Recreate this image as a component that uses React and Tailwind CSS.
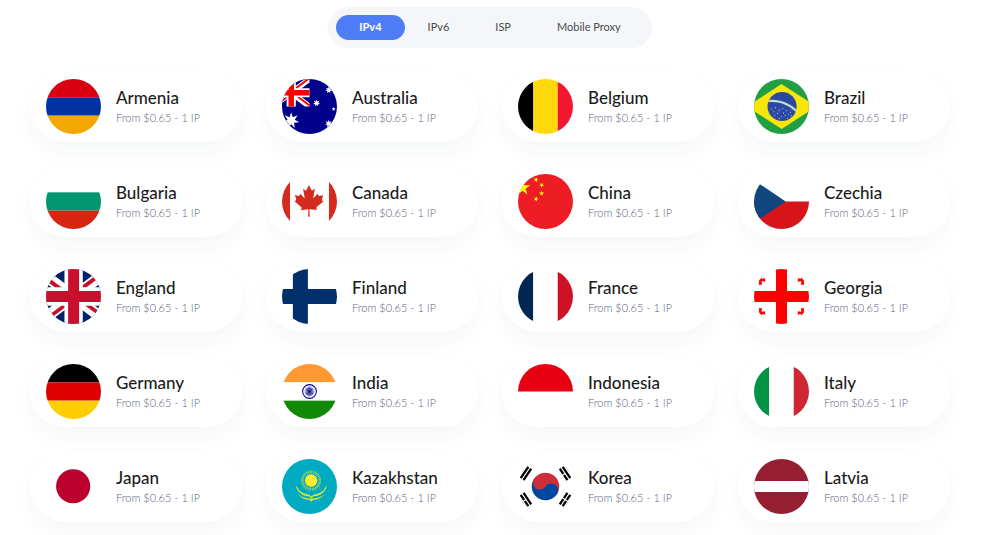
import React, { useState } from 'react';

// points of a regular star, starting from the top (or from `turn` degrees)
function starPoints(cx, cy, outer, inner, tips, turn = 0) {
  const points = [];
  for (let i = 0; i < tips * 2; i++) {
    const r = i % 2 === 0 ? outer : inner;
    const angle = (Math.PI * i) / tips - Math.PI / 2 + (turn * Math.PI) / 180;
    points.push((cx + r * Math.cos(angle)).toFixed(1) + ',' + (cy + r * Math.sin(angle)).toFixed(1));
  }
  return points.join(' ');
}

function Rows({ colors }) {
  return colors.map((color, i) => (
    <rect key={i} y={i * 160} width="640" height="160" fill={color} />
  ));
}

function Columns({ colors }) {
  return colors.map((color, i) => (
    <rect key={i} x={i * 213.3} width="213.4" height="480" fill={color} />
  ));
}

function UnionJack({ blue, red }) {
  return (
    <g>
      <path fill={blue} d="M0 0h640v480H0z" />
      <path fill="#fff" d="m75 0 244 181L562 0h78v62L400 241l240 178v61h-80L320 301 81 480H0v-60l239-178L0 64V0z" />
      <path fill={red} d="m424 281 216 159v40L369 281zm-184 20 6 35L54 480H0zM640 0v3L391 191l2-44L590 0zM0 0l239 176h-60L0 42z" />
      <path fill="#fff" d="M241 0v480h160V0zM0 160v160h640V160z" />
      <path fill={red} d="M0 193v96h640v-96zM273 0v480h96V0z" />
    </g>
  );
}

function Australia() {
  return (
    <g>
      <path fill="#00008b" d="M0 0h640v480H0z" />
      <g transform="scale(.5)">
        <UnionJack blue="#00008b" red="#f00" />
      </g>
      <g fill="#fff">
        <polygon points={starPoints(160, 362, 72, 32, 7)} />
        <polygon points={starPoints(488, 96, 32, 15, 7)} />
        <polygon points={starPoints(382, 210, 32, 15, 7)} />
        <polygon points={starPoints(488, 390, 34, 16, 7)} />
        <polygon points={starPoints(531, 262, 18, 8, 5)} />
      </g>
    </g>
  );
}

function Brazil() {
  const stars = [
    [232, 262], [252, 286], [268, 250], [286, 300], [300, 272], [318, 330], [330, 256], [338, 296],
    [352, 318], [362, 276], [372, 344], [384, 306], [398, 290], [406, 322], [300, 344], [262, 316], [412, 268],
  ];
  return (
    <g>
      <path fill="#229e45" d="M0 0h640v480H0z" />
      <path fill="#f8e509" d="m321.4 436 301.5-195.7L319.6 44 17.1 240.7z" />
      <circle cx="325" cy="240" r="127" fill="#2b49a3" />
      <path fill="#c4dfd2" d="M444.4 285.8a125 125 0 0 0 5.8-19.8c-67.8-59.5-143.3-90-238.7-83.7a125 125 0 0 0-8.5 20.9c113-10.8 196 39.2 241.4 82.6" />
      <g fill="#b9c6e6">
        {stars.map(([x, y]) => <circle key={x + '-' + y} cx={x} cy={y} r="5" />)}
      </g>
    </g>
  );
}

function Canada() {
  return (
    <g>
      <path fill="#fff" d="M150 0h340v480H150z" />
      <path fill="#d52b1e" d="M-19.7 0h169.8v480H-19.7zm509.5 0h169.9v480H489.9zM201 232l-13.3 4.4 61.4 54c4.7 13.7-1.6 17.8-5.6 25l66.6-8.4-1.6 67 13.9-.3-3.1-66.6 66.7 8c-4.1-8.7-7.8-13.3-4-27.2l61.3-51-10.7-4c-8.8-6.8 3.8-32.6 5.6-48.9 0 0-35.7 12.3-38 5.8l-9.2-17.5-32.6 35.8c-3.5.9-5-.5-5.9-3.5l15-74.8-23.8 13.4q-3.2 1.3-5.2-2.2l-23-46-23.6 47.8q-2.8 2.5-5 .7L264 130.8l13.7 74.1c-1.1 3-3.7 3.8-6.7 2.2l-31.2-35.3c-4 6.5-6.8 17.1-12.2 19.5s-23.5-4.5-35.6-7c4.2 14.8 17 39.6 9 47.7" />
    </g>
  );
}

function China() {
  return (
    <g>
      <path fill="#ee1c25" d="M0 0h640v480H0z" />
      <g fill="#ff0">
        <polygon points={starPoints(120, 120, 72, 27, 5)} />
        <polygon points={starPoints(238, 50, 24, 9, 5, 20)} />
        <polygon points={starPoints(286, 97, 24, 9, 5, 45)} />
        <polygon points={starPoints(286, 169, 24, 9, 5)} />
        <polygon points={starPoints(238, 218, 24, 9, 5, 20)} />
      </g>
    </g>
  );
}

function Czechia() {
  return (
    <g>
      <path fill="#fff" d="M0 0h640v240H0z" />
      <path fill="#d7141a" d="M0 240h640v240H0z" />
      <path fill="#11457e" d="M0 0l356 240L0 480z" />
    </g>
  );
}

function Finland() {
  return (
    <g>
      <path fill="#fff" d="M0 0h640v480H0z" />
      <path fill="#002f6c" d="M0 174.5h640v131H0z" />
      <path fill="#002f6c" d="M175 0h131v480H175z" />
    </g>
  );
}

function Georgia() {
  const cross = "M10.8-10.4c1-16.8 4-31.4 4-31.4s-9.8 1-14.8 1-14.8-1-14.8-1 3 14.5 4 31.4c-16.8-1-31.4-4-31.4-4s1 7.5 1 14.8-1 14.8-1 14.8 14.6-3 31.4-4c-1 16.8-4 31.4-4 31.4s7.4-1 14.8-1 14.7 1 14.7 1-3-14.5-4-31.4c16.9 1 31.4 4 31.4 4s-1-9.8-1-14.8c0-5.2 1-14.8 1-14.8s-14.5 3-31.3 4";
  return (
    <g fill="#f00">
      <path fill="#fff" d="M0 0h640v480H0z" />
      <path d="M272 0h96v480h-96zM0 192h640v96H0z" />
      <path d={cross} transform="translate(136 96)" />
      <path d={cross} transform="translate(504 96)" />
      <path d={cross} transform="translate(136 384)" />
      <path d={cross} transform="translate(504 384)" />
    </g>
  );
}

function India() {
  const spokes = Array.from({ length: 24 }, (_, i) => i * 15);
  return (
    <g>
      <Rows colors={['#ff9933', '#ffffff', '#128807']} />
      <g transform="translate(320 240)">
        <circle r="60" fill="#fff" stroke="#000088" strokeWidth="9" />
        <circle r="12" fill="#000088" />
        {spokes.map(angle => (
          <path key={angle} d="M0-52l3 26-3 24-3-24z" fill="#000088" transform={'rotate(' + angle + ')'} />
        ))}
      </g>
    </g>
  );
}

function Indonesia() {
  return (
    <g>
      <path fill="#fff" d="M0 240h640v240H0z" />
      <path fill="#e70011" d="M0 0h640v240H0z" />
    </g>
  );
}

function Japan() {
  return (
    <g>
      <path fill="#fff" d="M0 0h640v480H0z" />
      <circle cx="317" cy="238" r="149" fill="#bc002d" />
    </g>
  );
}

function Kazakhstan() {
  return (
    <g>
      <path fill="#00abc2" d="M0 0h640v480H0z" />
      <g transform="translate(334 188)">
        <circle r="54" fill="#ffec2d" />
        <circle r="76" fill="none" stroke="#ffec2d" strokeWidth="24" strokeDasharray="7 7.9" opacity=".75" />
      </g>
      <g fill="#d6e33a">
        <path d="M198 222c8 64 56 96 112 104 12 2 20 8 26 20 6-12 14-18 26-20 56-8 104-40 112-104-8 22-14 26-24 30 4 8 0 14-8 20-26 22-50 34-82 38l-24 14-24-14c-32-4-56-16-82-38-8-6-12-12-8-20-10-4-16-8-24-30z" />
        <path d="M222 310c26 30 58 46 98 48l16 16 16-16c40-2 72-18 98-48-28 20-60 32-92 34h-44c-32-2-64-14-92-34z" />
      </g>
    </g>
  );
}

function Korea() {
  const bars = "M-6-26H6v2H-6zm0 3H6v2H-6zm0 3H6v2H-6zM-6 18H6v2H-6zm0 3H6v2H-6zm0 3H6v2H-6z";
  return (
    <g>
      <path fill="#fff" d="M0 0h640v480H0z" />
      <g transform="translate(320 240) rotate(-56.3) scale(10)">
        <path d={bars} />
        <path stroke="#fff" d="M0 17v10" />
        <path fill="#cd2e3a" d="M0-12a12 12 0 0 1 0 24z" />
        <path fill="#0047a0" d="M0-12a12 12 0 0 0 0 24A6 6 0 0 0 0 0z" />
        <circle cy="-6" r="6" fill="#cd2e3a" />
      </g>
      <g transform="translate(320 240) rotate(-123.7) scale(10)">
        <path d={bars} />
        <path stroke="#fff" d="M0-23.5v3M0 17v3.5m0 3v3" />
      </g>
    </g>
  );
}

function Latvia() {
  return (
    <g>
      <path fill="#951f30" d="M0 0h640v480H0z" />
      <path fill="#fff" d="M0 193h640v96H0z" />
    </g>
  );
}

const types = ['IPv4', 'IPv6', 'ISP', 'Mobile Proxy'];

const countries = [
  { name: 'Armenia', flag: <Rows colors={['#d90012', '#0033a0', '#f2a800']} /> },
  { name: 'Australia', flag: <Australia /> },
  { name: 'Belgium', flag: <Columns colors={['#000001', '#ffd90c', '#f31830']} /> },
  { name: 'Brazil', flag: <Brazil /> },
  { name: 'Bulgaria', flag: <Rows colors={['#ffffff', '#00966e', '#d62612']} /> },
  { name: 'Canada', flag: <Canada /> },
  { name: 'China', flag: <China /> },
  { name: 'Czechia', flag: <Czechia /> },
  { name: 'England', flag: <UnionJack blue="#012169" red="#c8102e" /> },
  { name: 'Finland', flag: <Finland /> },
  { name: 'France', flag: <Columns colors={['#002654', '#ffffff', '#ce1126']} /> },
  { name: 'Georgia', flag: <Georgia /> },
  { name: 'Germany', flag: <Rows colors={['#000001', '#dd0000', '#ffce00']} /> },
  { name: 'India', flag: <India /> },
  { name: 'Indonesia', flag: <Indonesia /> },
  { name: 'Italy', flag: <Columns colors={['#009344', '#ffffff', '#cf2734']} /> },
  { name: 'Japan', flag: <Japan /> },
  { name: 'Kazakhstan', flag: <Kazakhstan /> },
  { name: 'Korea', flag: <Korea /> },
  { name: 'Latvia', flag: <Latvia /> },
];

function CountryCard({ name, flag }) {
  return (
    <a href={'#' + name.toLowerCase()} className="flex items-center gap-[15px] rounded-full bg-white px-4 py-2 shadow-[0_10px_20px_rgba(30,60,60,0.04)]">
      <svg viewBox="80 0 480 480" aria-hidden="true" className="size-[55px] shrink-0 rounded-full">
        {flag}
      </svg>
      <div className="pt-0.5 whitespace-nowrap">
        <div className="text-[17px] leading-5 font-medium text-[#1c1c1c]">{name}</div>
        <div className="text-[11px] leading-5 font-light text-[#5f6480]">From $0.65 - 1 IP</div>
      </div>
    </a>
  );
}

export default function App() {
  const [active, setActive] = useState('IPv4');

  return (
    <div className="min-h-screen overflow-hidden bg-white pt-[7px] pr-5 font-['Lato',sans-serif]">
      <nav className="mx-auto flex w-fit rounded-full bg-[#f4f6fa] px-2 py-2">
        {types.map(type => (
          <button
            key={type}
            onClick={() => setActive(type)}
            className={(type === active ? "bg-[#4f7df5] font-bold text-white" : "text-[#4a4a4a]") + " h-[25px] cursor-pointer rounded-full px-[23px] text-[11px]"}
          >
            {type}
          </button>
        ))}
      </nav>
      <div className="mx-auto mt-[23px] grid max-w-[920px] grid-cols-2 gap-6 md:grid-cols-4">
        {countries.map(country => (
          <CountryCard key={country.name} name={country.name} flag={country.flag} />
        ))}
      </div>
    </div>
  );
}
